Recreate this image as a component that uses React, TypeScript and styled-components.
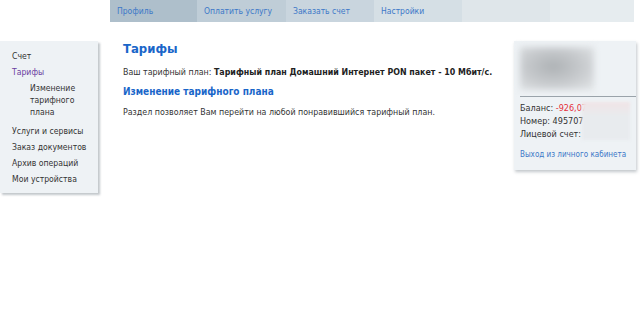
import React from "react";
import styled, { createGlobalStyle } from "styled-components";

const Global = createGlobalStyle`
  html, body { margin: 0; padding: 0; background: #fff; }
  body { font-family: "DejaVu Sans Condensed", "DejaVu Sans", Verdana, sans-serif; color: #333; }
`;

const Page = styled.div`
  width: 640px;
  height: 319px;
  overflow: hidden;
`;

const TopBar = styled.nav`
  display: flex;
  margin-left: 110px;
  height: 22px;
`;

const Tab = styled.a<{ $bg: string; $w: number }>`
  display: flex;
  align-items: center;
  flex: 0 0 ${(p) => p.$w}px;
  padding-left: 7px;
  box-sizing: border-box;
  background: ${(p) => p.$bg};
  color: #3c78c8;
  font-size: 8.5px;
  white-space: nowrap;
  text-decoration: none;
`;

const Body = styled.div`
  display: flex;
  align-items: flex-start;
  margin-top: 19px;
`;

const Sidebar = styled.ul`
  list-style: none;
  margin: 0;
  padding: 9px 0 8px 12px;
  width: 98px;
  flex: 0 0 98px;
  box-sizing: border-box;
  background: #eef2f5;
  box-shadow: 2px 2px 2px rgba(120, 130, 140, 0.45);
  display: flex;
  flex-direction: column;
  gap: 4px;
`;

const NavItem = styled.li<{ $active?: boolean; $sub?: boolean }>`
  font-size: 8.6px;
  line-height: 12px;
  white-space: ${(p) => (p.$sub ? "normal" : "nowrap")};
  color: ${(p) => (p.$active ? "#6a3ea0" : "#333")};
  padding-left: ${(p) => (p.$sub ? "18px" : "0")};
  padding-right: ${(p) => (p.$sub ? "20px" : "0")};
  margin-bottom: ${(p) => (p.$sub ? "3px" : "0")};
`;

const Main = styled.main`
  flex: 1;
  padding-left: 25px;
`;

const H1 = styled.h1`
  margin: 0 0 9px;
  font-size: 13px;
  line-height: 16px;
  color: #1a66c9;
  font-weight: bold;
`;

const Para = styled.p`
  margin: 0 0 7px;
  font-size: 8.8px;
  line-height: 12px;
  color: #333;
  white-space: nowrap;
  b { color: #222; }
`;

const H2 = styled.h2`
  margin: 0 0 8px;
  font-size: 10px;
  line-height: 13px;
  color: #1a66c9;
  font-weight: bold;
`;

const Panel = styled.aside`
  position: relative;
  flex: 0 0 122px;
  margin-right: 4px;
  box-sizing: border-box;
  background: #eef2f5;
  box-shadow: 1px 2px 3px rgba(120, 130, 140, 0.45);
  padding: 6px 0 10px 6px;
  height: 129px;
`;

const Blur = styled.div`
  height: 43px;
  width: 74px;
  background: radial-gradient(ellipse at 45% 45%, #aeb2b5 0%, #c7cacd 50%, #e3e6e8 100%);
  filter: blur(3px);
  margin-bottom: 6px;
`;

const Divider = styled.hr`
  border: 0;
  border-top: 1px solid #9aa3aa;
  margin: 0 0 5px;
`;

const InfoLine = styled.div`
  font-size: 9px;
  line-height: 13px;
  color: #333;
  white-space: nowrap;
`;

const Neg = styled.span`
  color: #e5303a;
`;

const Mask = styled.div`
  position: absolute;
  left: 68px;
  top: 61px;
  width: 48px;
  height: 38px;
  background: linear-gradient(#f0e4e6, #e8ebee 40%, #e8ebee);
  filter: blur(1.5px);
`;

const Logout = styled.a`
  display: block;
  margin-top: 9px;
  font-size: 8px;
  color: #3c78c8;
  text-decoration: none;
  white-space: nowrap;
`;

const tabs = [
  { t: "Профиль", bg: "#aebfcb", w: 87 },
  { t: "Оплатить услугу", bg: "#bfcdd7", w: 89 },
  { t: "Заказать счет", bg: "#c9d5de", w: 88 },
  { t: "Настройки", bg: "#d5dfe5", w: 88 },
  { t: "", bg: "#dfe6ea", w: 88 },
  { t: "", bg: "#e6ecef", w: 84 },
];

export default function App() {
  return (
    <Page>
      <Global />
      <TopBar>
        {tabs.map((x, i) => (
          <Tab key={i} $bg={x.bg} $w={x.w}>
            {x.t}
          </Tab>
        ))}
      </TopBar>
      <Body>
        <Sidebar>
          <NavItem>Счет</NavItem>
          <NavItem $active>Тарифы</NavItem>
          <NavItem $sub>Изменение тарифного плана</NavItem>
          <NavItem>Услуги и сервисы</NavItem>
          <NavItem>Заказ документов</NavItem>
          <NavItem>Архив операций</NavItem>
          <NavItem>Мои устройства</NavItem>
        </Sidebar>
        <Main>
          <H1>Тарифы</H1>
          <Para>
            Ваш тарифный план: <b>Тарифный план Домашний Интернет PON пакет - 10 Мбит/с.</b>
          </Para>
          <H2>Изменение тарифного плана</H2>
          <Para>Раздел позволяет Вам перейти на любой понравившийся тарифный план.</Para>
        </Main>
        <Panel>
          <Blur />
          <Divider />
          <InfoLine>
            Баланс: <Neg>-926,07</Neg>
          </InfoLine>
          <InfoLine>Номер: 495707</InfoLine>
          <InfoLine>Лицевой счет:</InfoLine>
          <Mask />
          <Logout>Выход из личного кабинета</Logout>
        </Panel>
      </Body>
    </Page>
  );
}
